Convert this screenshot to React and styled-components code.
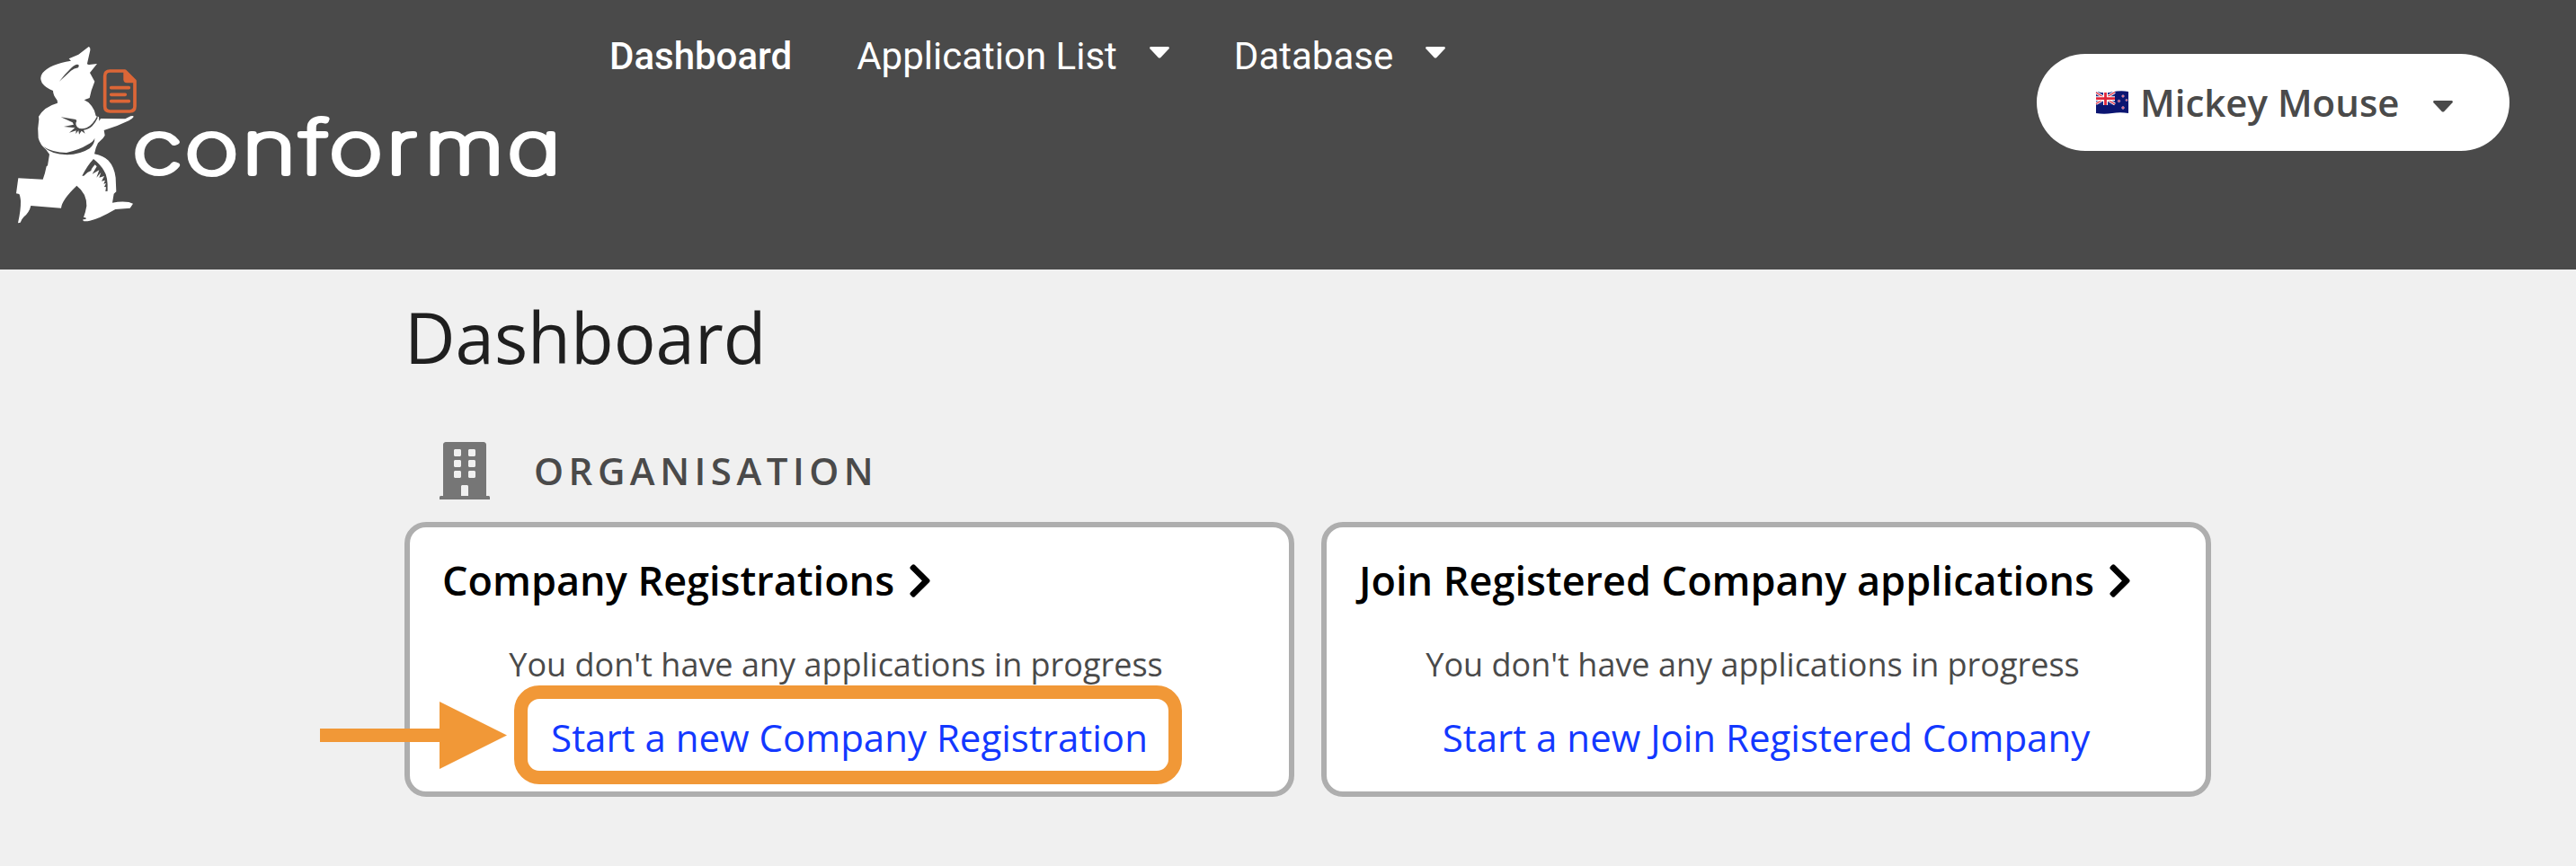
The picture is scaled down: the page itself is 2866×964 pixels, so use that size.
import React from 'react';
import styled, { createGlobalStyle } from 'styled-components';
import { FaBuilding, FaChevronRight } from 'react-icons/fa';

const GlobalStyle = createGlobalStyle`
  *, *::before, *::after { box-sizing: border-box; }
  body {
    margin: 0;
    background: #f0f0f0;
    color: #4a4a4a;
    font-family: "Open Sans", "Noto Sans", sans-serif;
  }
`;

const Page = styled.div`
  min-height: 964px;
  overflow: hidden;
`;

const Header = styled.header`
  display: flex;
  align-items: flex-start;
  height: 300px;
  padding-right: 74px;
  background: #4a4a4a;
`;

const LogoSvg = styled.svg`
  flex: none;
  display: block;
  width: 678px;
  height: 300px;
`;

const Wordmark = styled.text`
  font-family: Inter, sans-serif;
  font-weight: 100;
  font-size: 80px;
  font-feature-settings: "cv11";
  fill: #fff;
  stroke: #fff;
  stroke-width: 6.1px;
  stroke-linejoin: round;
`;

const Nav = styled.nav`
  display: flex;
  gap: 72px;
  padding-top: 38px;
`;

const NavItem = styled.a`
  display: flex;
  align-items: flex-start;
  gap: 36px;
  color: #fff;
  font-family: Roboto, sans-serif;
  font-size: 42px;
  font-weight: ${(p) => (p.$active ? 500 : 400)};
  line-height: 50px;
  white-space: nowrap;
`;

const CaretSvg = styled.svg`
  flex: none;
  display: block;
  width: 22px;
  height: 13px;
  margin-top: ${(p) => p.$top}px;
`;

const UserMenu = styled.div`
  display: flex;
  align-items: center;
  width: 526px;
  height: 108px;
  margin: 60px 0 0 auto;
  padding-left: 65px;
  border-radius: 54px;
  background: #fff;
`;

const FlagSvg = styled.svg`
  flex: none;
  width: 38px;
  height: 28px;
`;

const UserName = styled.span`
  margin: 0 37px 0 12px;
  font-size: 42px;
  font-weight: 600;
  line-height: 60px;
  white-space: nowrap;
`;

const Main = styled.main`
  width: 2010px;
  margin-left: 450px;
  padding-top: 25px;
`;

const PageTitle = styled.h1`
  margin: 0;
  color: #1f1f1f;
  font-size: 78px;
  font-weight: 400;
  line-height: 100px;
`;

const SectionHeading = styled.h2`
  display: flex;
  align-items: center;
  gap: 49px;
  height: 64px;
  margin: 67px 0 25px;
  padding-left: 39px;
  font-size: 42px;
  font-weight: 600;
  line-height: 64px;
  letter-spacing: 5.5px;

  svg {
    width: 56px;
    height: 64px;
    color: #767676;
  }
`;

const CardGrid = styled.section`
  display: grid;
  grid-template-columns: 1fr 1fr;
  gap: 30px;
`;

const Card = styled.article`
  display: flex;
  flex-direction: column;
  height: 306px;
  padding: 29px 36px 0;
  border: 6px solid #aeaeae;
  border-radius: 24px;
  background: #fff;
`;

const CardTitle = styled.h3`
  display: flex;
  align-items: center;
  gap: 15px;
  margin: 0;
  color: #000;
  font-size: 45px;
  font-weight: 600;
  line-height: 60px;
  white-space: nowrap;

  svg {
    width: 27px;
    height: 43px;
  }
`;

const Message = styled.p`
  margin: 39px 30px 0 0;
  font-size: 36px;
  line-height: 50px;
  text-align: center;
`;

const StartLink = styled.a`
  position: relative;
  align-self: center;
  margin-top: 26px;
  color: #1338ff;
  font-size: 42px;
  line-height: 60px;
  white-space: nowrap;
`;

const HighlightBox = styled.span`
  position: absolute;
  inset: -28px -38px -22px -41px;
  border: 15px solid #f19837;
  border-radius: 28px;
`;

const HighlightArrow = styled.svg`
  position: absolute;
  top: -10px;
  left: -257px;
  width: 208px;
  height: 75px;
`;

const Caret = ({ color, top = 0 }) => (
  <CaretSvg $top={top} viewBox="0 0 22 13" fill={color}>
    <path d="M1.6 0H20.4C21.8 0 22.3 1.4 21.5 2.3L12.4 12C11.6 12.8 10.4 12.8 9.6 12L.5 2.3C-.3 1.4.2 0 1.6 0Z" />
  </CaretSvg>
);

const Logo = () => (
  <LogoSvg viewBox="0 0 678 300">
    <g transform="translate(0 30) scale(.33333)">
      <path
        fill="#fff"
        d="M296 66Q302 68 301 78L291 122Q292 127 298 126L324 123L300 153L316 182L305 212L299 237L281 244Q296 250 306 264Q318 280 320 297L324 299L330 300L331 314L336 306L418 307L436 298Q446 295 446 300Q442 307 430 313Q392 332 347 345L350 362L344 371L327 388L320 404L315 424Q346 431 362 446Q382 468 386 503L388 550L380 557L375 587Q405 581 430 585L444 590L434 605L385 609Q330 641 300 647Q286 650 278 648L277 643L287 642L286 637L279 636Q286 617 289 598Q290 556 256 530Q206 578 204 605L103 597Q98 619 80 634Q72 642 68 653L60 655Q70 610 69 580Q67 562 64 558L54 556L61 505L143 509Q151 488 155 466L159 463L165 425L153 409Q134 393 128 371Q124 340 130 308L129 299Q148 266 192 254Q194 247 188 241Q177 226 177 213Q152 204 140 187Q131 170 142 154Q166 124 237 113L230 106L262 92Z"
      />
      <g fill="#4a4a4a">
        <path d="M198 182Q216 158 239 136Q253 122 262 126Q265 130 261 136Q247 138 237 146Z" />
        <path d="M143 398Q174 419 222 420Q266 410 291 394Q312 383 316 371Q317 389 299 406Q268 426 224 427Q170 425 143 398Z" />
        <path d="M325 296L326 304Q318 321 308 331Q296 343 279 344L284 356L272 347L264 359L262 346L253 357L254 346L231 353L250 337L213 333L246 326L242 319L203 301L253 309L256 314Q249 325 259 335Q269 344 289 337Q311 326 325 296Z" />
        <path d="M312 441Q292 462 274 497L280 497Q291 484 304 480Q304 474 317 460L323 466L308 491L331 478L322 503L337 486L331 503L348 498L339 515L351 512L346 524L354 522L348 534L354 535L352 549L359 548Q361 500 347 480Q336 460 312 441Z" />
      </g>
      <path
        d="M367 147H417L450 180V265Q450 282 433 282H367Q350 282 350 265V164Q350 147 367 147Z"
        fill="none"
        stroke="#dc6637"
        strokeWidth="11"
        strokeLinejoin="round"
      />
      <path d="M412 145H419L453 179V187H424Q412 187 412 175Z" fill="#dc6637" />
      <path d="M371 203H430M371 226H418M371 248H430" stroke="#dc6637" strokeWidth="11" strokeLinecap="round" />
    </g>
    <g transform="translate(0 193.3) scale(1.27 1)">
      <Wordmark x="116.4 162.2 212.4 263.2 288.5 338.6 372.3 444.7" y="0">conforma</Wordmark>
    </g>
  </LogoSvg>
);

const Flag = () => (
  <FlagSvg viewBox="0 0 38 28">
    <path d="M1 2Q10 4.5 19 2.5T37 2V26Q28 24.5 19 26T1 26Z" fill="#0b1571" />
    <path d="M1 2Q10 4.5 19 2.5L22 2V16.5Q12 18 1 16Z" fill="#1d2b86" />
    <path d="M1 3L22 16M22 2.5L1 15.5" stroke="#fff" strokeWidth="3.2" />
    <path d="M1 3L22 16M22 2.5L1 15.5" stroke="#e0263a" strokeWidth="1.3" />
    <path d="M11.5 3V17M1 9.7H22" stroke="#fff" strokeWidth="5" />
    <path d="M11.5 3V17M1 9.7H22" stroke="#e0263a" strokeWidth="2.8" />
    <g fill="#e0506a" stroke="#c9c4e6" strokeWidth=".5">
      <circle cx="31" cy="7" r="1.3" />
      <circle cx="26.5" cy="12.5" r="1.3" />
      <circle cx="35" cy="11.5" r="1.1" />
      <circle cx="31" cy="20" r="1.4" />
    </g>
  </FlagSvg>
);

const ApplicationCard = ({ title, link, highlighted }) => (
  <Card>
    <CardTitle>
      {title}
      <FaChevronRight />
    </CardTitle>
    <Message>You don't have any applications in progress</Message>
    <StartLink>
      {link}
      {highlighted && (
        <>
          <HighlightBox />
          <HighlightArrow viewBox="0 0 208 75" fill="#f19837">
            <path d="M0 30H133V0L208 37.5L133 75V45H0Z" />
          </HighlightArrow>
        </>
      )}
    </StartLink>
  </Card>
);

export default function App() {
  return (
    <Page>
      <GlobalStyle />
      <Header>
        <Logo />
        <Nav>
          <NavItem $active>Dashboard</NavItem>
          <NavItem>
            Application List
            <Caret color="#fff" top={14} />
          </NavItem>
          <NavItem>
            Database
            <Caret color="#fff" top={14} />
          </NavItem>
        </Nav>
        <UserMenu>
          <Flag />
          <UserName>Mickey Mouse</UserName>
          <Caret color="#4a4a4a" top={8} />
        </UserMenu>
      </Header>
      <Main>
        <PageTitle>Dashboard</PageTitle>
        <SectionHeading>
          <FaBuilding />
          ORGANISATION
        </SectionHeading>
        <CardGrid>
          <ApplicationCard
            title="Company Registrations"
            link="Start a new Company Registration"
            highlighted
          />
          <ApplicationCard
            title="Join Registered Company applications"
            link="Start a new Join Registered Company"
          />
        </CardGrid>
      </Main>
    </Page>
  );
}
